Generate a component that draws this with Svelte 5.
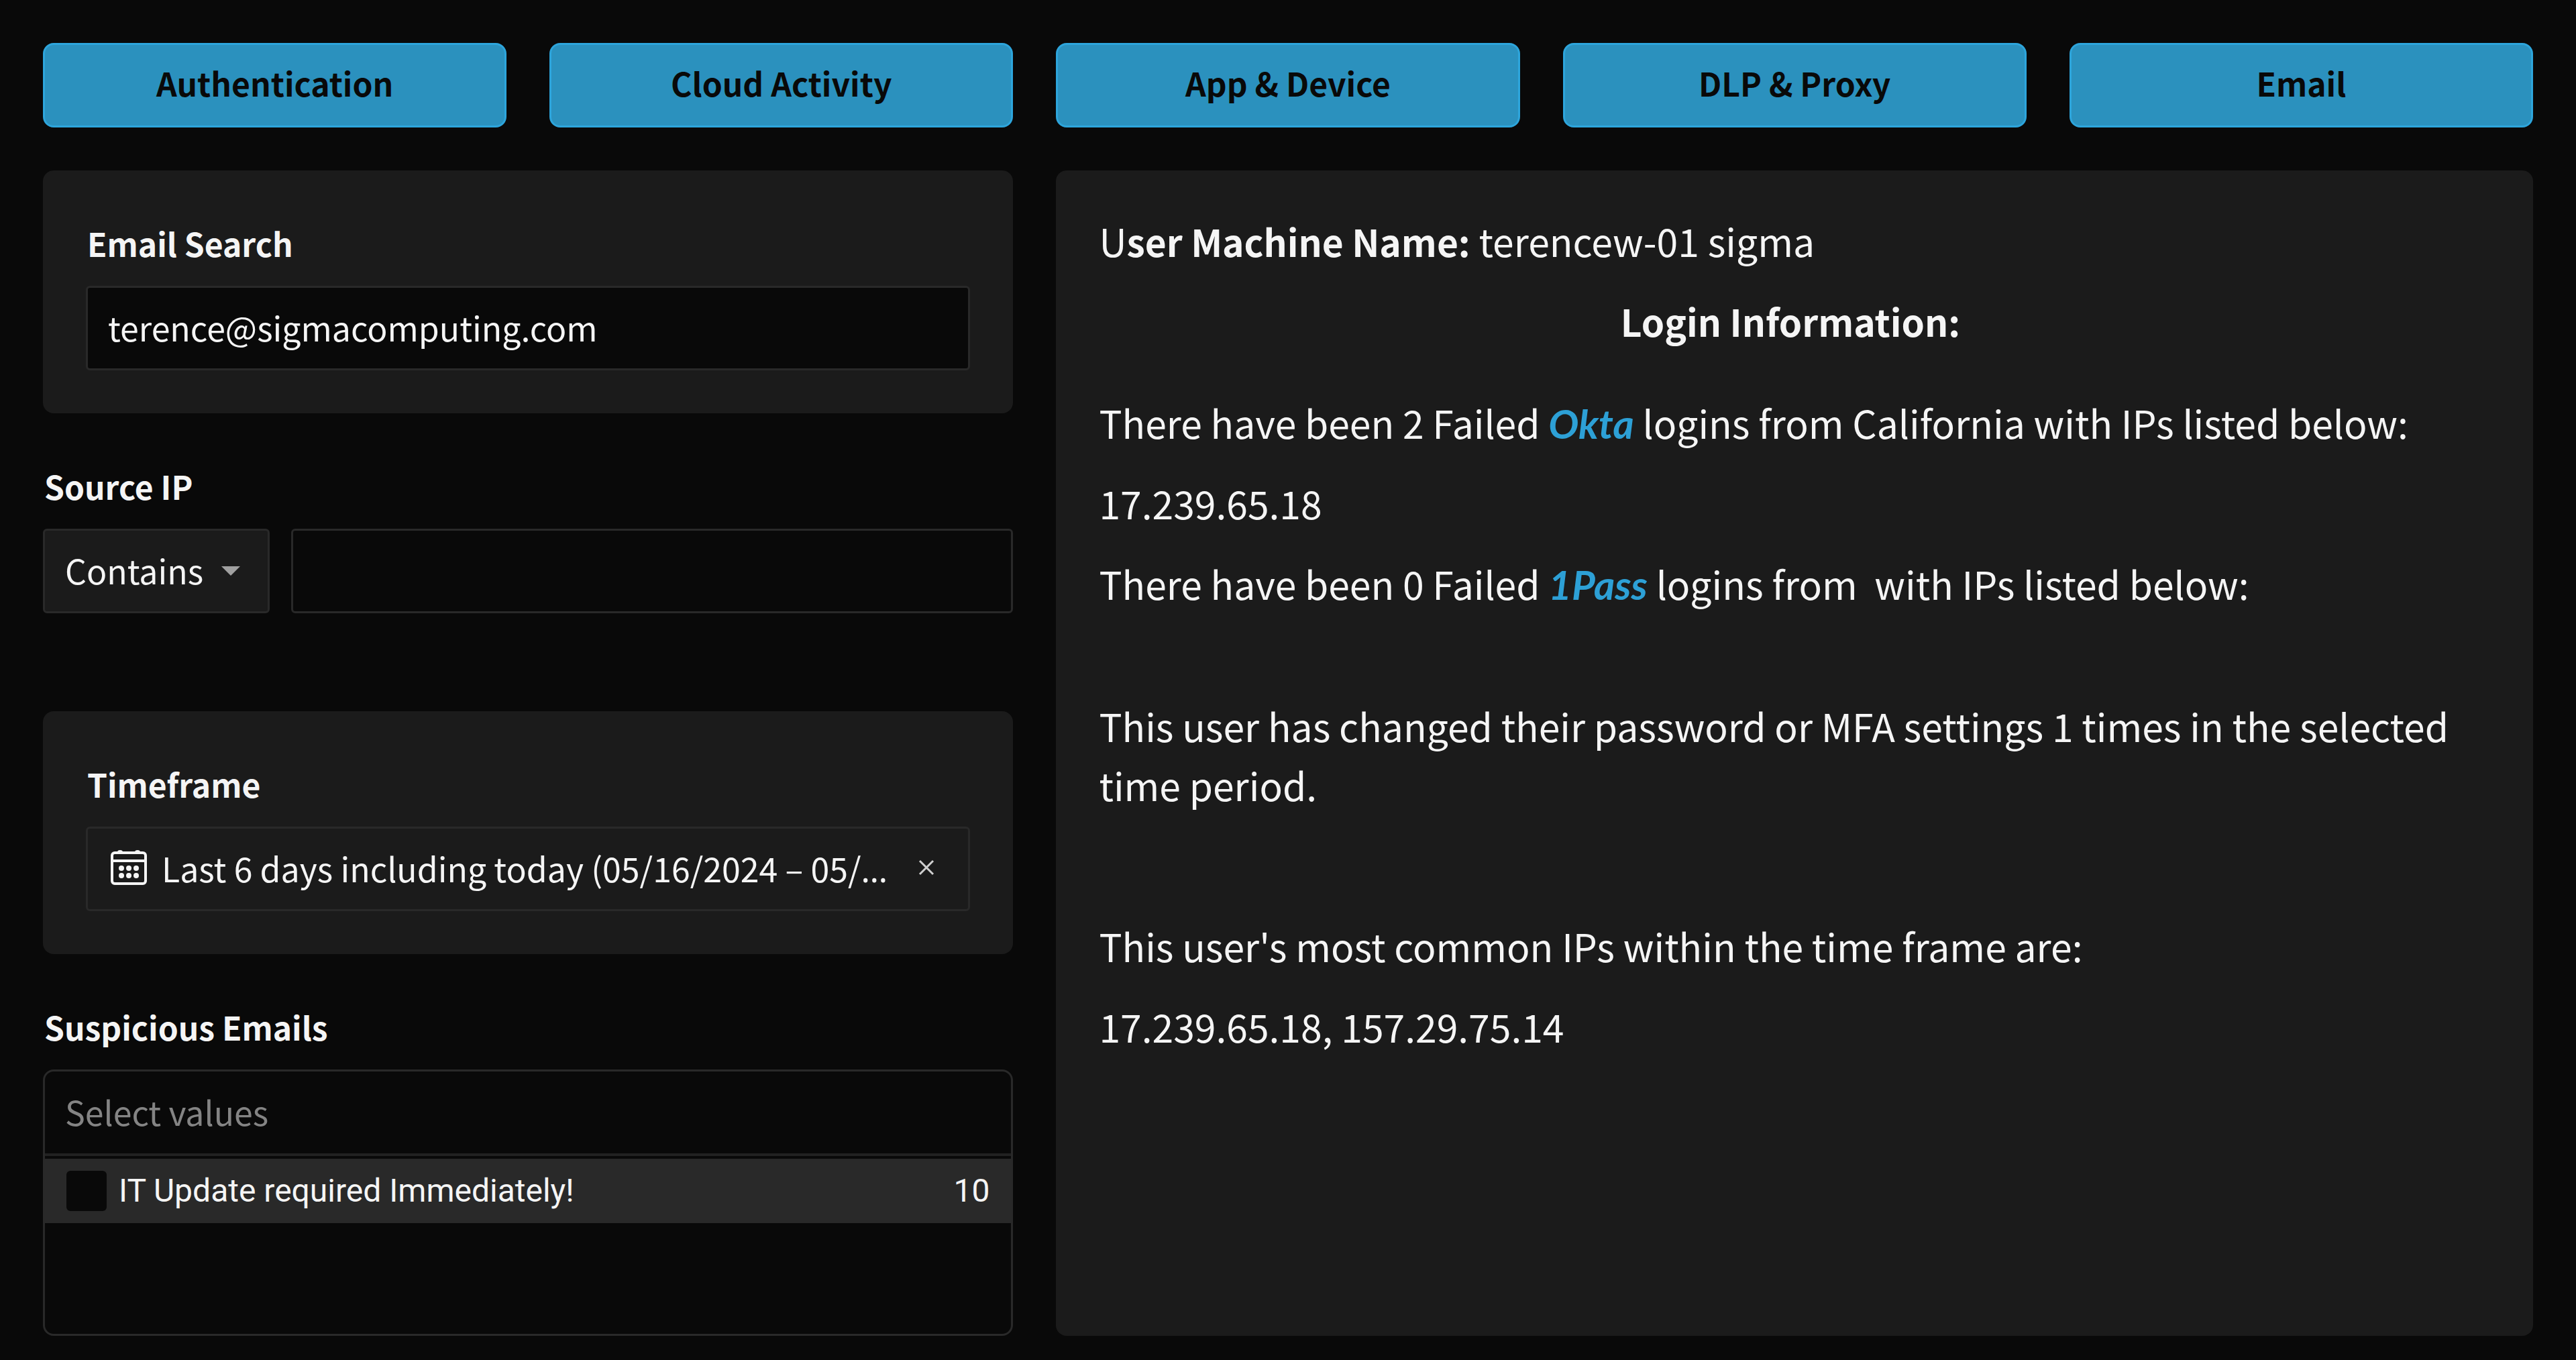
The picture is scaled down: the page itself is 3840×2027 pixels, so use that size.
<script lang="ts">
  const tabs = ['Authentication', 'Cloud Activity', 'App & Device', 'DLP & Proxy', 'Email'];

  let email = $state('terence@sigmacomputing.com');
  let operator = $state('Contains');
  let sourceIp = $state('');
  let timeframe = $state('Last 6 days including today (05/16/2024 – 05/');
  let search = $state('');
  let subjects = $state([{ name: 'IT Update required Immediately!', count: 10, checked: false }]);
</script>

<main class="dashboard">
  {#each tabs as tab}
    <button class="tab" type="button">{tab}</button>
  {/each}

  <div class="filters">
    <section class="card">
      <label class="title" for="email">Email Search</label>
      <input id="email" class="field" type="text" bind:value={email} />
    </section>

    <section class="control source">
      <label class="title" for="source-ip">Source IP</label>
      <div class="row">
        <div class="select">
          <select class="field" aria-label="Source IP operator" bind:value={operator}>
            <option>Contains</option>
            <option>Equals</option>
          </select>
          <svg class="caret" viewBox="0 0 28 14" aria-hidden="true"><path d="M0 0h28L14 14z" /></svg>
        </div>
        <input id="source-ip" class="field" type="text" bind:value={sourceIp} />
      </div>
    </section>

    <section class="card">
      <div class="title" id="timeframe-label">Timeframe</div>
      <div class="field timeframe">
        <button class="range" type="button" aria-labelledby="timeframe-label timeframe-value">
          <svg class="calendar" viewBox="0 0 54 52" aria-hidden="true">
            <rect x="2" y="4" width="50" height="46" rx="4" />
            <path d="M2 16h50" />
            <path class="solid" d="M10 3q0-3 4-3t4 3zM36 3q0-3 4-3t4 3z" />
            {#each [16, 27, 38] as x}
              {#each [27, 38] as y}
                <circle class="solid" cx={x} cy={y} r="4" />
              {/each}
            {/each}
          </svg>
          <span id="timeframe-value">{timeframe}<span class="more">…</span></span>
        </button>
        <button class="clear" type="button" aria-label="Clear timeframe" onclick={() => (timeframe = '')}>
          <svg viewBox="0 0 24 24" aria-hidden="true"><path d="M2 2l20 20M22 2L2 22" /></svg>
        </button>
      </div>
    </section>

    <section class="control emails">
      <label class="title" for="subjects">Suspicious Emails</label>
      <div class="list">
        <input id="subjects" type="text" placeholder="Select values" bind:value={search} />
        {#each subjects as subject}
          <label class="item">
            <input type="checkbox" bind:checked={subject.checked} />
            <span class="name">{subject.name}</span>
            <span>{subject.count}</span>
          </label>
        {/each}
      </div>
    </section>
  </div>

  <article class="summary">
    <p>U<strong>ser Machine Name:</strong> terencew-01 sigma</p>
    <h2>Login Information:&nbsp;</h2>
    <p>There have been 2 Failed <em>Okta</em> logins from California with IPs listed below:</p>
    <p>17.239.65.18</p>
    <p>There have been 0 Failed <em>1Pass</em> logins from&nbsp; with IPs listed below:</p>
    <p class="password">This user has changed their password or MFA settings 1 times in the selected time period.</p>
    <p class="common">This user's most common IPs within the time frame are:</p>
    <p>17.239.65.18, 157.29.75.14</p>
  </article>
</main>

<style>
  :global(body) {
    background: #090909;
  }

  .dashboard {
    box-sizing: border-box;
    min-height: 100vh;
    padding: 64px 64px 36px;
    display: grid;
    grid-template-columns: repeat(5, minmax(0, 1fr));
    grid-template-rows: auto 1fr;
    gap: 64px;
    color: #f5f5f5;
    font-family: 'Noto Sans CJK SC', 'Noto Sans', sans-serif;
    font-size: 50px;
    line-height: 72px;
  }

  button,
  input,
  select {
    box-sizing: border-box;
    margin: 0;
    font: inherit;
    color: inherit;
  }

  .tab {
    height: 126px;
    padding: 0 0 8px;
    border: 3px solid #2da5dc;
    border-radius: 16px;
    background: #2b91be;
    color: #090909;
    font-size: 48px;
    font-weight: 700;
  }

  .filters {
    grid-column: span 2;
    display: flex;
    flex-direction: column;
  }

  .card {
    padding: 72px 64px 64px;
    border-radius: 16px;
    background: #1b1b1b;
  }

  .title {
    display: block;
    margin: 0 2px 28px;
    font-size: 48px;
    font-weight: 700;
  }

  .field {
    display: block;
    width: 100%;
    height: 126px;
    padding: 0 30px 4px;
    border: 3px solid #292929;
    border-radius: 6px;
    background: #090909;
  }

  .control {
    padding-top: 72px;
  }

  .source {
    padding-bottom: 146px;
  }

  .row {
    display: flex;
    gap: 32px;
  }

  .select {
    position: relative;
    flex: 0 0 338px;
  }

  .select .field {
    appearance: none;
    background: #1b1b1b;
  }

  .caret {
    position: absolute;
    top: 56px;
    right: 44px;
    width: 28px;
    height: 14px;
    fill: #a0a0a0;
    pointer-events: none;
  }

  .timeframe {
    box-sizing: border-box;
    display: flex;
    align-items: center;
    background: none;
  }

  .range {
    flex: 1;
    min-width: 0;
    display: flex;
    align-items: center;
    gap: 22px;
    padding: 0;
    border: 0;
    background: none;
    text-align: left;
    white-space: nowrap;
  }

  .more {
    font-family: 'Noto Sans', sans-serif;
    line-height: 1;
  }

  .calendar {
    flex: none;
    width: 54px;
    height: 52px;
    margin-left: 4px;
    fill: none;
    stroke: #f5f5f5;
    stroke-width: 4;
  }

  .calendar .solid {
    fill: #f5f5f5;
    stroke: none;
  }

  .clear {
    display: flex;
    padding: 20px;
    border: 0;
    background: none;
  }

  .clear svg {
    width: 24px;
    height: 24px;
    stroke: #d0d0d0;
    stroke-width: 3;
  }

  .emails {
    flex: 1;
    display: flex;
    flex-direction: column;
  }

  .list {
    flex: 1;
    border: 3px solid #292929;
    border-radius: 16px;
    background: #090909;
  }

  .list input[type='text'] {
    display: block;
    width: 100%;
    height: 126px;
    padding: 0 30px 4px;
    border: 0;
    border-bottom: 4px solid #222222;
    background: none;
  }

  .list input::placeholder {
    color: #848484;
    opacity: 1;
  }

  .item {
    display: flex;
    align-items: center;
    gap: 18px;
    height: 96px;
    margin-top: 4px;
    padding: 0 32px;
    background: #292929;
    font-family: Roboto, sans-serif;
    font-size: 48px;
  }

  .item .name {
    flex: 1;
  }

  .item input {
    appearance: none;
    width: 60px;
    height: 60px;
    border-radius: 6px;
    background: #090909;
  }

  .item input:checked {
    background: #2b91be;
  }

  .summary {
    grid-column: span 3;
    padding: 60px 64px;
    border-radius: 16px;
    background: #1b1b1b;
    font-size: 57px;
    line-height: 88px;
  }

  .summary p,
  .summary h2 {
    margin: 0 0 32px;
  }

  .summary h2 {
    margin-bottom: 63px;
    font-size: 55px;
    font-weight: 700;
    text-align: center;
  }

  .summary strong {
    font-size: 55px;
    font-weight: 700;
    line-height: 1;
  }

  .summary em {
    color: #2da0d6;
    font-family: Lato, sans-serif;
    font-size: 60px;
    font-weight: 700;
    line-height: 1;
  }

  .summary .password {
    margin-top: 124px;
  }

  .summary .common {
    margin-top: 152px;
  }
</style>
